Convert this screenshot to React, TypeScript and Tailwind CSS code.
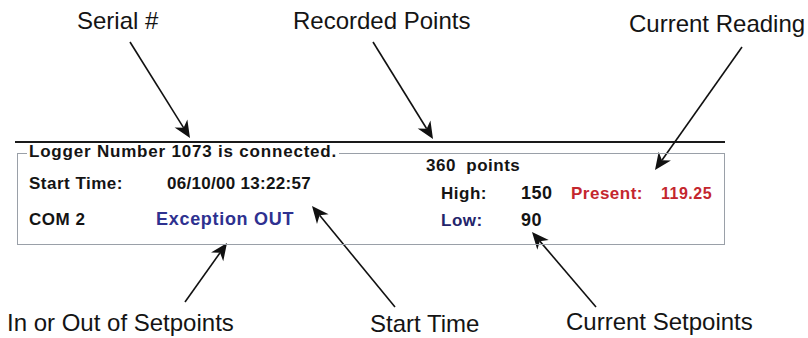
import React from 'react'

type Pt = [number, number]

const arrows: { from: Pt; to: Pt }[] = [
    { from: [130, 42], to: [190, 138] },
    { from: [373, 42], to: [433, 139] },
    { from: [742, 47], to: [655, 170] },
    { from: [185, 302], to: [227, 243] },
    { from: [395, 307], to: [312, 206] },
    { from: [596, 307], to: [532, 232] },
]

// line + barbed head, head drawn from the tip backwards
const Arrow = ({ from, to }: { from: Pt; to: Pt }) => {
    const [x1, y1] = from
    const [x2, y2] = to
    const len = Math.hypot(x2 - x1, y2 - y1)
    const ux = (x2 - x1) / len
    const uy = (y2 - y1) / len
    const px = -uy
    const py = ux
    const L = 17
    const W = 7.5
    const N = 12
    const bx = x2 - ux * L
    const by = y2 - uy * L
    const nx = x2 - ux * N
    const ny = y2 - uy * N
    const head = [
        [x2, y2],
        [bx + px * W, by + py * W],
        [nx, ny],
        [bx - px * W, by - py * W],
    ]
        .map((p) => p.join(','))
        .join(' ')
    return (
        <g>
            <line x1={x1} y1={y1} x2={nx} y2={ny} stroke="#111" strokeWidth={1.6} />
            <polygon points={head} fill="#111" />
        </g>
    )
}

const App = () => {
    return (
        <div className="relative w-[808px] h-[338px] overflow-hidden bg-white text-[#141414] font-['Liberation_Sans',Arial,sans-serif]">
            {/* callout labels */}
            <div className="absolute left-[77px] top-[8px] text-[24px] leading-[26px]">Serial #</div>
            <div className="absolute left-[293px] top-[8px] text-[24px] leading-[26px]">Recorded Points</div>
            <div className="absolute left-[629px] top-[11px] text-[24px] leading-[26px]">Current Reading</div>
            <div className="absolute left-[7px] top-[310px] text-[24px] leading-[26px]">In or Out of Setpoints</div>
            <div className="absolute left-[370px] top-[311px] text-[24px] leading-[26px]">Start Time</div>
            <div className="absolute left-[566px] top-[309px] text-[24px] leading-[26px]">Current Setpoints</div>

            <svg className="absolute inset-0" width={808} height={338}>
                {arrows.map((a, i) => (
                    <Arrow key={i} from={a.from} to={a.to} />
                ))}
            </svg>

            {/* logger panel */}
            <div className="ml-[15px] mt-[141px] w-[710px] border-t-2 border-[#1a1a1a]">
                <div className="relative ml-[2px] mt-[10px] w-[708px] h-[92px] border border-[#9aa0a8] font-bold text-[17px] leading-[16px] tracking-[0.5px]">
                    <div className="absolute -top-[10px] left-[9px] bg-white px-[2px] tracking-[0.8px]">
                        Logger Number 1073 is connected.
                    </div>

                    <div className="flex">
                        {/* left side */}
                        <div className="flex flex-col w-[408px] pl-[11px] pt-[22px] gap-[19px]">
                            <div className="flex items-baseline">
                                <span className="w-[138px]">Start Time:</span>
                                <span className="tracking-[0.3px]">06/10/00 13:22:57</span>
                            </div>
                            <div className="flex items-baseline">
                                <span className="w-[127px]">COM 2</span>
                                <span className="text-[18px] tracking-[0.7px] text-[#2e3190]">Exception OUT</span>
                            </div>
                        </div>

                        {/* right side */}
                        <div className="flex flex-col pt-[4px]">
                            <div className="whitespace-pre">360  points</div>
                            <div className="flex items-baseline mt-[11px] ml-[15px]">
                                <span className="w-[80px]">High:</span>
                                <span className="w-[50px] text-[18px]">150</span>
                                <span className="w-[90px] text-[#c4262e]">Present:</span>
                                <span className="text-[16px] text-[#c4262e]">119.25</span>
                            </div>
                            <div className="flex items-baseline mt-[10px] ml-[15px]">
                                <span className="w-[80px] text-[#23246b]">Low:</span>
                                <span className="text-[18px]">90</span>
                            </div>
                        </div>
                    </div>
                </div>
            </div>
        </div>
    )
}

export default App
